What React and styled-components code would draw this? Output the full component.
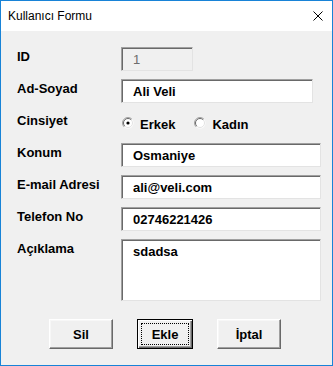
import React from "react";
import styled, { createGlobalStyle } from "styled-components";

const GlobalStyle = createGlobalStyle`
  * {
    box-sizing: border-box;
  }
  body {
    margin: 0;
    background: #ffffff;
    font-family: "Liberation Sans", Arial, sans-serif;
  }
`;

const Window = styled.div`
  width: 333px;
  height: 366px;
  border: 1px solid #1883d7;
  background: #f0f0f0;
  display: flex;
  flex-direction: column;
`;

const TitleBar = styled.div`
  height: 30px;
  flex: none;
  background: #ffffff;
  display: flex;
  align-items: center;
  justify-content: space-between;
  padding: 0 9px 0 7px;
  font-size: 12px;
  color: #000000;
`;

const Body = styled.div`
  flex: 1;
  padding: 16px 11px 0 16px;
`;

const FormGrid = styled.div`
  display: grid;
  grid-template-columns: 104px 200px;
  grid-template-rows: repeat(6, 24px) 62px;
  row-gap: 8px;
`;

const Label = styled.div`
  padding-top: 2px;
  font-size: 13px;
  line-height: 15px;
  font-weight: bold;
  color: #000000;
  white-space: nowrap;
`;

const sunken = `
  border: 1px solid;
  border-color: #a0a0a0 #e3e3e3 #e3e3e3 #a0a0a0;
  box-shadow: inset 1px 1px 0 #696969;
`;

const Field = styled.input`
  ${sunken}
  width: ${({ $width }) => $width}px;
  height: 24px;
  margin: 0;
  padding: 0 0 0 11px;
  background: ${({ disabled }) => (disabled ? "#f0f0f0" : "#ffffff")};
  font-family: "Liberation Sans", Arial, sans-serif;
  font-size: 13px;
  font-weight: ${({ disabled }) => (disabled ? "normal" : "bold")};
  color: ${({ disabled }) => (disabled ? "#6d6d6d" : "#000000")};
  outline: none;
`;

const Notes = styled.textarea`
  ${sunken}
  width: 200px;
  height: 62px;
  margin: 0;
  padding: 4px 0 0 11px;
  resize: none;
  background: #ffffff;
  font-family: "Liberation Sans", Arial, sans-serif;
  font-size: 13px;
  line-height: 15px;
  font-weight: bold;
  color: #000000;
  outline: none;
  overflow: hidden;
`;

const RadioGroup = styled.div`
  display: flex;
  gap: 19px;
  padding: 6px 0 0 1px;
`;

const RadioOption = styled.label`
  display: flex;
  align-items: flex-start;
  gap: 6px;
  font-size: 13px;
  line-height: 15px;
  font-weight: bold;
  color: #000000;

  svg {
    flex: none;
  }
`;

const ButtonRow = styled.div`
  display: flex;
  gap: 24px;
  margin-top: 18px;
  padding-left: 32px;
`;

const Button = styled.button`
  width: ${({ $width }) => $width}px;
  height: 30px;
  margin: 0;
  padding: 0;
  background: #f0f0f0;
  font-family: "Liberation Sans", Arial, sans-serif;
  font-size: 13px;
  font-weight: bold;
  color: #000000;
  border: 1px solid;
  border-color: ${({ $primary }) =>
    $primary ? "#000000" : "#ffffff #696969 #696969 #ffffff"};
  box-shadow: ${({ $primary }) =>
    $primary
      ? "inset 1px 1px 0 #ffffff, inset -1px -1px 0 #696969, inset -2px -2px 0 #a0a0a0"
      : "inset -1px -1px 0 #a0a0a0, inset 1px 1px 0 #f7f7f7"};
  outline: ${({ $primary }) => ($primary ? "1px dotted #000000" : "none")};
  outline-offset: -5px;
`;

const CloseIcon = () => (
  <svg width="10" height="10" viewBox="0 0 10 10">
    <path d="M0.5 0.5 L9.5 9.5 M9.5 0.5 L0.5 9.5" stroke="#000" strokeWidth="1" />
  </svg>
);

const RadioMark = ({ checked }) => (
  <svg width="12" height="12" viewBox="0 0 12 12">
    <circle cx="6" cy="6" r="5.5" fill="#ffffff" />
    <path d="M2.1 9.9 A5.5 5.5 0 0 1 9.9 2.1" fill="none" stroke="#a0a0a0" />
    <path d="M2.8 9.2 A4.5 4.5 0 0 1 9.2 2.8" fill="none" stroke="#696969" />
    <path d="M2.8 9.2 A4.5 4.5 0 0 0 9.2 2.8" fill="none" stroke="#e3e3e3" />
    {checked && <circle cx="6" cy="6" r="1.6" fill="#000000" />}
  </svg>
);

const App = () => {
  return (
    <>
      <GlobalStyle />
      <Window>
        <TitleBar>
          <span>Kullanıcı Formu</span>
          <CloseIcon />
        </TitleBar>
        <Body>
          <FormGrid>
            <Label>ID</Label>
            <Field $width={72} defaultValue="1" disabled />

            <Label>Ad-Soyad</Label>
            <Field $width={192} defaultValue="Ali Veli" readOnly />

            <Label>Cinsiyet</Label>
            <RadioGroup>
              <RadioOption>
                <RadioMark checked />
                Erkek
              </RadioOption>
              <RadioOption>
                <RadioMark />
                Kadın
              </RadioOption>
            </RadioGroup>

            <Label>Konum</Label>
            <Field $width={200} defaultValue="Osmaniye" readOnly />

            <Label>E-mail Adresi</Label>
            <Field $width={200} defaultValue="ali@veli.com" readOnly />

            <Label>Telefon No</Label>
            <Field $width={200} defaultValue="02746221426" readOnly />

            <Label>Açıklama</Label>
            <Notes defaultValue="sdadsa" readOnly />
          </FormGrid>
          <ButtonRow>
            <Button $width={64}>Sil</Button>
            <Button $width={56} $primary>
              Ekle
            </Button>
            <Button $width={64}>İptal</Button>
          </ButtonRow>
        </Body>
      </Window>
    </>
  );
};

export default App;
